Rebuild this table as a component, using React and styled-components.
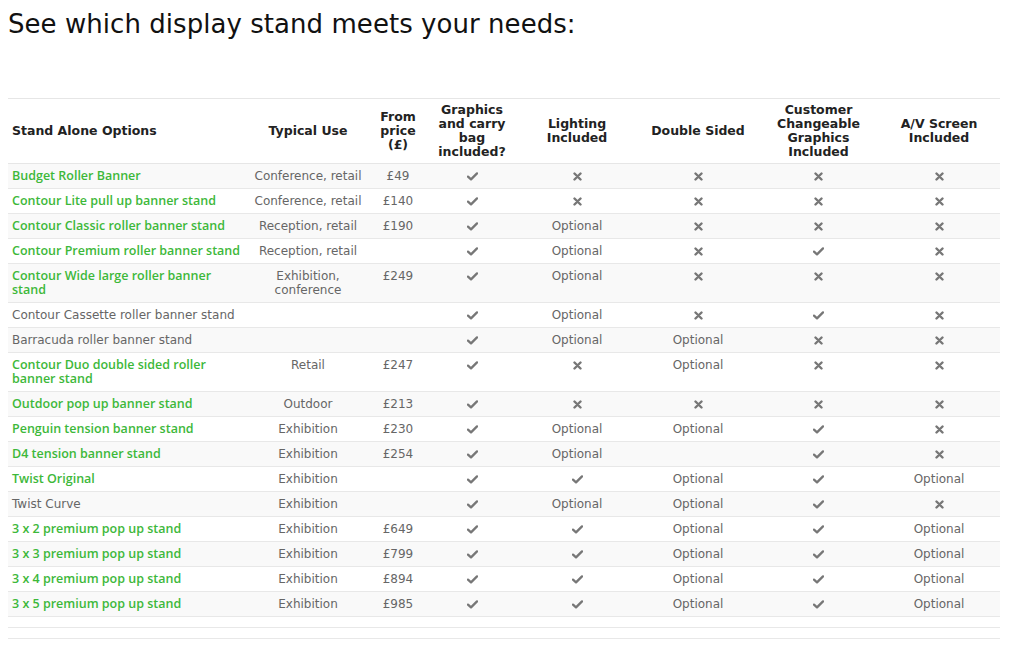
import React from "react";
import styled, { createGlobalStyle } from "styled-components";

const Global = createGlobalStyle`
  body {
    margin: 8px;
    background: #fff;
    font-family: "DejaVu Sans", "Liberation Sans", sans-serif;
    color: #666;
  }
`;

const Title = styled.h1`
  margin: 0 0 58px;
  font-size: 26px;
  line-height: 32px;
  font-weight: 400;
  color: #111;
  letter-spacing: 0.05px;
`;

const Table = styled.table`
  width: 992px;
  border-collapse: collapse;
  table-layout: fixed;
  border-top: 1px solid #e6e6e6;
  font-size: 12px;
`;

const HeadCell = styled.th`
  padding: 4px 4px;
  line-height: 14px;
  font-size: 12.5px;
  font-weight: 700;
  color: #222;
  vertical-align: middle;
  text-align: ${(p) => (p.$left ? "left" : "center")};
  border-bottom: 1px solid #e6e6e6;
`;

const Row = styled.tr`
  background: ${(p) => (p.$odd ? "#f9f9f9" : "#fff")};
  border-bottom: 1px solid #e8e8e8;
`;

const Cell = styled.td`
  padding: 5px 4px;
  line-height: 14px;
  vertical-align: top;
  text-align: ${(p) => (p.$left ? "left" : "center")};
  color: #666;
`;

const NameCell = styled(Cell)`
  font-family: ${(p) => (p.$link ? '"Open Sans", "DejaVu Sans", sans-serif' : '"DejaVu Sans", sans-serif')};
  font-size: ${(p) => (p.$link ? "12.5px" : "12px")};
  color: ${(p) => (p.$link ? "#3db83a" : "#666")};
  font-weight: ${(p) => (p.$link ? 600 : 400)};
`;

const FootRow = styled.tr`
  border-bottom: 1px solid #e8e8e8;
`;

const FootCell = styled.td`
  padding: 5px 0;
  height: 0;
`;

const IconBox = styled.span`
  display: inline-flex;
  align-items: center;
  justify-content: center;
  height: 14px;
  vertical-align: top;
`;

const Check = () => (
  <IconBox>
    <svg width="11" height="9" viewBox="0 0 11 9">
      <path d="M1 4.6 L4 7.4 L10 1.4" fill="none" stroke="#777" strokeWidth="2.3" strokeLinecap="round" strokeLinejoin="round" />
    </svg>
  </IconBox>
);

const Cross = () => (
  <IconBox>
    <svg width="9" height="9" viewBox="0 0 9 9">
      <path d="M1.5 1.5 L7.5 7.5 M7.5 1.5 L1.5 7.5" fill="none" stroke="#777" strokeWidth="2.4" strokeLinecap="round" />
    </svg>
  </IconBox>
);

const Val = ({ v }) => {
  if (v === "y") return <Check />;
  if (v === "n") return <Cross />;
  return v;
};

const cols = [239, 122, 58, 90, 120, 122, 119, 122];

const headers = [
  "Stand Alone Options",
  "Typical Use",
  ["From", "price", "(£)"],
  ["Graphics", "and carry", "bag", "included?"],
  ["Lighting", "Included"],
  "Double Sided",
  ["Customer", "Changeable", "Graphics", "Included"],
  ["A/V Screen", "Included"],
];

const rows = [
  [true, "Budget Roller Banner", "Conference, retail", "£49", "y", "n", "n", "n", "n"],
  [true, "Contour Lite pull up banner stand", "Conference, retail", "£140", "y", "n", "n", "n", "n"],
  [true, "Contour Classic roller banner stand", "Reception, retail", "£190", "y", "Optional", "n", "n", "n"],
  [true, "Contour Premium roller banner stand", "Reception, retail", "", "y", "Optional", "n", "y", "n"],
  [true, "Contour Wide large roller banner stand", "Exhibition, conference", "£249", "y", "Optional", "n", "n", "n"],
  [false, "Contour Cassette roller banner stand", "", "", "y", "Optional", "n", "y", "n"],
  [false, "Barracuda roller banner stand", "", "", "y", "Optional", "Optional", "n", "n"],
  [true, "Contour Duo double sided roller banner stand", "Retail", "£247", "y", "n", "Optional", "n", "n"],
  [true, "Outdoor pop up banner stand", "Outdoor", "£213", "y", "n", "n", "n", "n"],
  [true, "Penguin tension banner stand", "Exhibition", "£230", "y", "Optional", "Optional", "y", "n"],
  [true, "D4 tension banner stand", "Exhibition", "£254", "y", "Optional", "", "y", "n"],
  [true, "Twist Original", "Exhibition", "", "y", "y", "Optional", "y", "Optional"],
  [false, "Twist Curve", "Exhibition", "", "y", "Optional", "Optional", "y", "n"],
  [true, "3 x 2 premium pop up stand", "Exhibition", "£649", "y", "y", "Optional", "y", "Optional"],
  [true, "3 x 3 premium pop up stand", "Exhibition", "£799", "y", "y", "Optional", "y", "Optional"],
  [true, "3 x 4 premium pop up stand", "Exhibition", "£894", "y", "y", "Optional", "y", "Optional"],
  [true, "3 x 5 premium pop up stand", "Exhibition", "£985", "y", "y", "Optional", "y", "Optional"],
];

export default function App() {
  return (
    <>
      <Global />
      <Title>See which display stand meets your needs:</Title>
      <Table>
        <colgroup>
          {cols.map((w, i) => (
            <col key={i} style={{ width: w }} />
          ))}
        </colgroup>
        <thead>
          <tr>
            {headers.map((h, i) => (
              <HeadCell key={i} $left={i === 0}>
                {Array.isArray(h)
                  ? h.map((l, j) => (
                      <React.Fragment key={j}>
                        {j > 0 && <br />}
                        {l}
                      </React.Fragment>
                    ))
                  : h}
              </HeadCell>
            ))}
          </tr>
        </thead>
        <tbody>
          {rows.map(([link, name, use, price, ...vals], i) => (
            <Row key={i} $odd={i % 2 === 0}>
              <NameCell $left $link={link}>{name}</NameCell>
              <Cell>{use}</Cell>
              <Cell>{price}</Cell>
              {vals.map((v, j) => (
                <Cell key={j}>
                  <Val v={v} />
                </Cell>
              ))}
            </Row>
          ))}
        </tbody>
        <tfoot>
          <FootRow>
            <FootCell colSpan={8} />
          </FootRow>
          <FootRow>
            <FootCell colSpan={8} />
          </FootRow>
        </tfoot>
      </Table>
    </>
  );
}
